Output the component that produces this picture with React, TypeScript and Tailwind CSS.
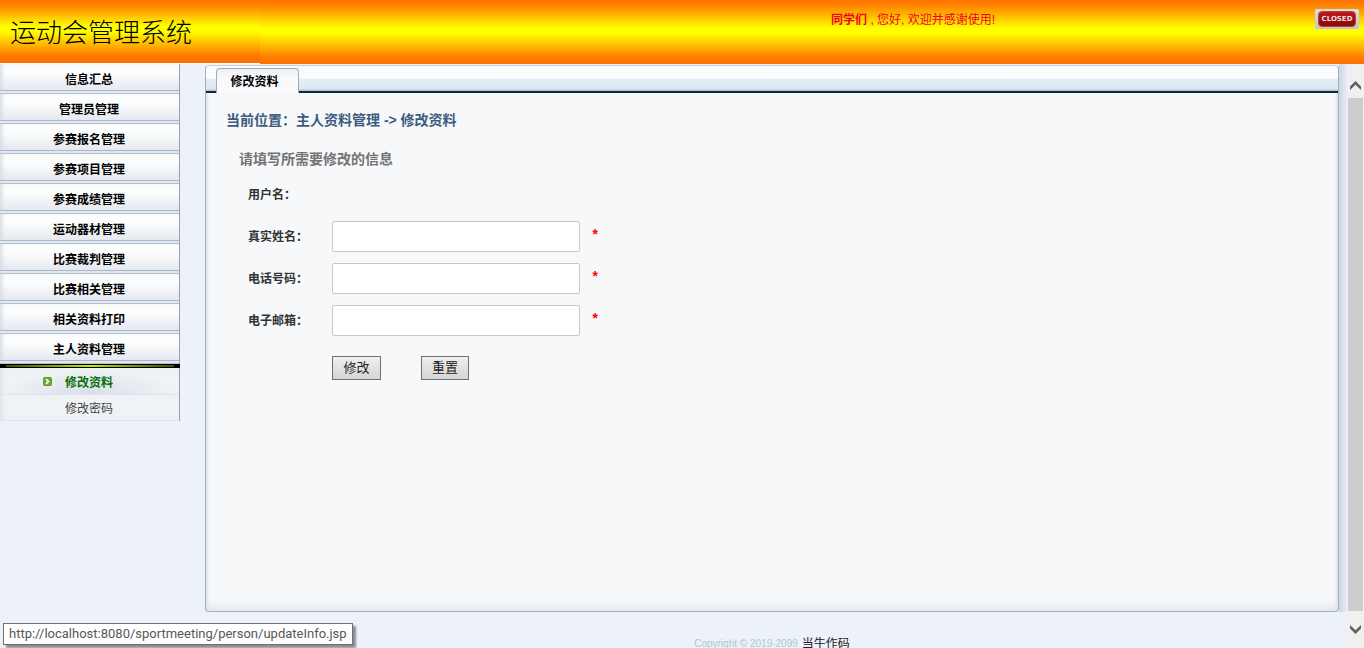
import { useState } from 'react';
import clsx from 'clsx';

const menu = [
  '信息汇总',
  '管理员管理',
  '参赛报名管理',
  '参赛项目管理',
  '参赛成绩管理',
  '运动器材管理',
  '比赛裁判管理',
  '比赛相关管理',
  '相关资料打印',
  '主人资料管理',
];

const subMenu = ['修改资料', '修改密码'];

const fields = [
  { id: 'realname', label: '真实姓名：' },
  { id: 'phone', label: '电话号码：' },
  { id: 'email', label: '电子邮箱：' },
];

function Header() {
  return (
    <header className="flex h-16 shrink-0 bg-[linear-gradient(#ff7200,#ff8000_8%,#ffff00_44%,#ffff00_52%,#ff8000_88%,#ff7000)]">
      {/* logo strip is one pixel shorter than the bar */}
      <div className="w-[61%]">
        <div className="h-16 w-[260px] border-b border-white bg-[linear-gradient(#ff7200,#ff8000_8%,#ffff00_42%,#ffff00_50%,#ff8000_86%,#ff6800)] pl-2.5">
          <h1 className="pt-3 font-['Noto_Sans_CJK_SC',sans-serif] text-[26px] leading-[38px] font-light whitespace-nowrap text-black">
            运动会管理系统
          </h1>
        </div>
      </div>
      <p className="-ml-px pt-2.5 text-xs leading-5 text-[#f00020]">
        <b>同学们</b> , 您好, 欢迎并感谢使用!
      </p>
      <button
        type="button"
        className="mt-[9px] mr-[5px] ml-auto flex h-5 w-11 items-center justify-center rounded-xs bg-linear-to-b from-[#dedede] to-[#c4c4c4]"
      >
        <span className="flex h-4 w-[38px] items-center justify-center rounded-sm border border-[#b94040] bg-linear-to-b from-[#bb1a1a] to-[#8c0808]">
          <svg viewBox="0 0 34 8" className="h-2 w-[34px]" aria-label="CLOSED">
            <text
              x="17"
              y="6"
              textAnchor="middle"
              fontFamily="DejaVu Sans"
              fontWeight="bold"
              fontSize="7"
              fill="#f4dede"
            >
              CLOSED
            </text>
          </svg>
        </span>
      </button>
    </header>
  );
}

function Sidebar() {
  const [active, setActive] = useState('修改资料');

  return (
    <nav className="w-[180px] shrink-0 self-start border-r border-[#93a2af] text-center text-xs">
      {menu.map((item) => (
        <a
          key={item}
          href="#"
          className="block h-[30px] bg-linear-to-b from-[#fcfdfd] from-30% to-[#dfe3ec] font-bold text-black shadow-[inset_4px_0_4px_-2px_#d5dbe3]"
        >
          <span className="block h-[27px] border-b border-[#aab9c7] pr-px leading-8">{item}</span>
          <span className="block h-[3px] border-b border-[#b3c0cd] bg-[#e1e7ef]" />
        </a>
      ))}
      <div className="-mr-px h-1 bg-black px-1.5 py-px">
        <div className="h-0.5 bg-linear-to-r from-[#3c5000] via-[#c0f000] to-[#3c5000]" />
      </div>
      {subMenu.map((item) => (
        <a
          key={item}
          href="#"
          onClick={() => setActive(item)}
          className={clsx(
            'relative block border-b border-[#e1e5e9] pr-px shadow-[inset_4px_0_4px_-2px_#dde2e6]',
            active === item
              ? 'h-[27px] bg-[radial-gradient(ellipse_at_bottom,#d9deea,#f0f3f6_70%)] leading-[31px] font-bold text-[#087008]'
              : 'h-[26px] bg-[#f0f3f6] leading-[29px] text-[#444]',
          )}
        >
          {active === item && (
            <svg viewBox="0 0 9 9" className="absolute top-[9px] left-[43px] size-[9px]">
              <rect x="0.5" y="0.5" width="8" height="8" rx="1" fill="#72a934" stroke="#5d9a28" />
              <path d="M3 2l2.5 2.5L3 7" fill="none" stroke="#fff" strokeWidth="1.6" />
            </svg>
          )}
          {item}
        </a>
      ))}
    </nav>
  );
}

function EditForm() {
  return (
    <form className="pl-[42px] text-xs text-[#333]" onSubmit={(e) => e.preventDefault()}>
      <div className="flex h-[42px] items-center pt-0.5 font-bold">用户名：</div>
      {fields.map((f) => (
        <div key={f.id} className="flex h-[42px] items-center">
          <label htmlFor={f.id} className="w-21 pt-0.5 font-bold">
            {f.label}
          </label>
          <input
            id={f.id}
            name={f.id}
            className="h-[31px] w-62 rounded-xs border border-[#c8c8c8] bg-white px-2 outline-none focus:border-[#8aa4c0]"
          />
          <span className="ml-[11px] font-['Liberation_Mono'] text-sm font-bold text-[#ff0000]">*</span>
        </div>
      ))}
      <div className="mt-[15px] ml-21 flex gap-10 text-[13px] text-[#222]">
        <button
          type="submit"
          className="h-6 w-[49px] border border-[#707070] bg-linear-to-b from-[#efefef] to-[#d5d5d5]"
        >
          修改
        </button>
        <button
          type="reset"
          className="h-6 w-12 border border-[#707070] bg-linear-to-b from-[#efefef] to-[#d5d5d5]"
        >
          重置
        </button>
      </div>
    </form>
  );
}

function Panel() {
  return (
    <section className="mt-px flex min-h-0 flex-1 flex-col rounded-sm border border-[#9eb0be] border-t-[#c2d3df] bg-[#f7f8fa] shadow-[inset_3px_0_2px_-1px_#dfe8ee,inset_-4px_0_2px_-2px_#dce6ed,inset_0_-10px_8px_-5px_#e3e8ea]">
      <div className="flex h-[27px] shrink-0 items-end rounded-t-sm border-b-2 border-[#0f2a40] bg-[linear-gradient(#f8fbfb,#fdfefe_48%,#e6edf2_54%,#e0e8f0_90%,#a9c0d4)] pl-2.5">
        <button
          type="button"
          className="-mb-0.5 h-[25px] w-[83px] rounded-t-sm border border-b-0 border-[#a9a9b0] bg-linear-to-b from-[#eeeff2] to-[#f9fafc] to-40% pt-0.5 pr-1.5 text-xs font-bold text-black"
        >
          修改资料
        </button>
      </div>
      <h2 className="mt-[17px] pl-5 text-sm font-bold text-[#3c5c7e]">当前位置：主人资料管理 -&gt; 修改资料</h2>
      <p className="mt-[19px] pl-[33px] text-sm font-bold text-[#737373]">请填写所需要修改的信息</p>
      <div className="mt-1">
        <EditForm />
      </div>
    </section>
  );
}

function ScrollRail() {
  return (
    <div className="flex w-[17px] shrink-0 flex-col items-center bg-[#f0f0f0]">
      <div className="flex h-[34px] w-full items-end justify-center pb-2">
        <svg viewBox="0 0 11 9" className="h-[9px] w-[11px]" fill="#606060">
          <path d="M5.5 0L11 5.5V9L5.5 3.7L0 9V5.5Z" />
        </svg>
      </div>
      <div className="w-[15px] flex-1 bg-[#cdcdcd]" />
      <div className="flex h-[37px] w-full items-center justify-center">
        <svg viewBox="0 0 11 9" className="h-[9px] w-[11px]" fill="#606060">
          <path d="M5.5 9L11 3.5V0L5.5 5.3L0 0V3.5Z" />
        </svg>
      </div>
    </div>
  );
}

export default function App() {
  return (
    <div className="relative flex h-screen flex-col overflow-hidden bg-[#edf1fa] font-['Liberation_Sans','Noto_Sans_CJK_SC',sans-serif]">
      <Header />
      <div className="flex min-h-0 flex-1">
        <Sidebar />
        <main className="ml-[25px] flex min-w-0 flex-1 flex-col">
          <div className="flex min-h-0 flex-1">
            <Panel />
            <div className="w-2 bg-linear-to-r from-[#cdd5e5] to-[#e9edf7]" />
          </div>
          <footer className="flex h-9 shrink-0 items-end justify-center gap-1 pr-2 text-[10px] leading-3 whitespace-nowrap">
            <span className="-mb-0.5 text-[#a8cad4]">Copyright © 2019-2099</span>
            <a href="#" className="-mb-0.5 text-xs leading-3 text-[#222]">
              当牛作码
            </a>
          </footer>
        </main>
        <ScrollRail />
      </div>
      <div className="absolute bottom-[3px] left-[3px] h-[22px] border border-[#707070] bg-white px-[5px] font-['Roboto',sans-serif] text-[13px] leading-5 whitespace-nowrap text-[#575757] shadow-[3px_3px_2px_#8c8c94]">
        http://localhost:8080/sportmeeting/person/updateInfo.jsp
      </div>
    </div>
  );
}
